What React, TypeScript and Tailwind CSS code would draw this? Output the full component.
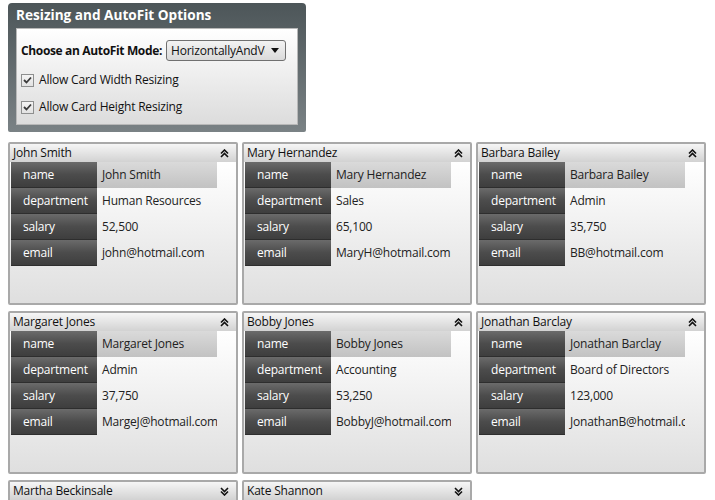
const cards = [
  { name: "John Smith", department: "Human Resources", salary: "52,500", email: "john@hotmail.com" },
  { name: "Mary Hernandez", department: "Sales", salary: "65,100", email: "MaryH@hotmail.com" },
  { name: "Barbara Bailey", department: "Admin", salary: "35,750", email: "BB@hotmail.com" },
  { name: "Margaret Jones", department: "Admin", salary: "37,750", email: "MargeJ@hotmail.com" },
  { name: "Bobby Jones", department: "Accounting", salary: "53,250", email: "BobbyJ@hotmail.com" },
  { name: "Jonathan Barclay", department: "Board of Directors", salary: "123,000", email: "JonathanB@hotmail.com" },
];

const collapsed = ["Martha Beckinsale", "Kate Shannon"];

function Chevrons({ up }: { up: boolean }) {
  return (
    <svg width="9" height="9" viewBox="0 0 9 9" className={up ? "" : "rotate-180"}>
      <path d="M1 4.5 L4.5 1 L8 4.5 M1 8 L4.5 4.5 L8 8" fill="none" stroke="#111" strokeWidth="1.6" />
    </svg>
  );
}

function Check() {
  return (
    <span className="flex h-[13px] w-[13px] items-center justify-center border border-[#8e8f8f] bg-gradient-to-b from-[#f4f4f4] to-[#e2e2e2]">
      <svg width="9" height="8" viewBox="0 0 9 8">
        <path d="M1 4 L3.5 6.5 L8 1.5" fill="none" stroke="#3a3a3a" strokeWidth="1.8" />
      </svg>
    </span>
  );
}

function CardHeader({ title, up }: { title: string; up: boolean }) {
  return (
    <div className="flex h-[18px] items-center justify-between bg-gradient-to-b from-[#f6f6f6] to-[#d2d2d2] pl-[3px] pr-[7px] text-[#111]">
      <span className="leading-none">{title}</span>
      <Chevrons up={up} />
    </div>
  );
}

function Card({ c }: { c: (typeof cards)[number] }) {
  const rows: [string, string][] = [
    ["name", c.name],
    ["department", c.department],
    ["salary", c.salary],
    ["email", c.email],
  ];
  return (
    <div className="flex h-[163px] flex-col overflow-hidden rounded-[2px] border-2 border-[#a9a9a9]">
      <CardHeader title={c.name} up />
      <div className="flex-1 bg-gradient-to-b from-white to-[#dfdfdf] pl-px">
        {rows.map(([k, v], i) => (
          <div key={k} className="flex h-[26px]">
            <div className="flex w-[86px] items-center border-b border-[#2e2e2e] bg-gradient-to-b from-[#6b6b6b] via-[#4c4c4c] to-[#3e3e3e] pl-3 text-white">
              {k}
            </div>
            <div
              className={
                "flex w-[120px] items-center overflow-hidden whitespace-nowrap pl-[5px] text-[#222] " +
                (i === 0 ? "bg-gradient-to-b from-[#dadada] to-[#c2c2c2]" : "")
              }
            >
              {v}
            </div>
          </div>
        ))}
      </div>
    </div>
  );
}

export default function App() {
  return (
    <div className="h-[500px] overflow-hidden bg-white font-['Open_Sans',sans-serif] text-[12px] tracking-[-0.2px]">
      <div className="pl-2 pt-[3px]">
        <div className="w-[298px] rounded-t-[4px] rounded-b-[2px] bg-gradient-to-b from-[#4d5659] to-[#7a8285] px-2 pb-[7px] pt-[3px]">
          <div className="h-[22px] text-[13.6px] font-bold leading-[18px] tracking-normal text-white">Resizing and AutoFit Options</div>
          <div className="h-[97px] border border-[#b8b8b8] bg-gradient-to-b from-white to-[#dcdcdc] p-px">
            <div className="flex flex-col px-[3px] pt-[10px]">
              <div className="flex items-center gap-[4px]">
                <span className="font-bold tracking-[-0.35px] text-[#111]">Choose an AutoFit Mode:</span>
                <div className="flex h-[21px] w-[120px] items-center justify-between rounded-[3px] border border-[#707070] bg-gradient-to-b from-[#f3f3f3] to-[#dadada] pl-[4px] pr-[6px]">
                  <span className="w-[94px] overflow-hidden whitespace-nowrap text-[#111]">HorizontallyAndVertically</span>
                  <svg width="8" height="5" viewBox="0 0 8 5">
                    <path d="M0 0 H8 L4 5 Z" fill="#111" />
                  </svg>
                </div>
              </div>
              <div className="mt-[10px] flex items-center gap-[5px] text-[#111]">
                <Check />
                <span>Allow Card Width Resizing</span>
              </div>
              <div className="mt-[9px] flex items-center gap-[5px] text-[#111]">
                <Check />
                <span>Allow Card Height Resizing</span>
              </div>
            </div>
          </div>
        </div>
      </div>

      <div className="mt-[10px] grid grid-cols-[230px_230px_230px] gap-x-[4px] gap-y-[6px] pl-2">
        {cards.map((c) => (
          <Card key={c.name} c={c} />
        ))}
        {collapsed.map((t) => (
          <div key={t} className="overflow-hidden rounded-[2px] border-2 border-[#a9a9a9]">
            <CardHeader title={t} up={false} />
          </div>
        ))}
      </div>
    </div>
  );
}
